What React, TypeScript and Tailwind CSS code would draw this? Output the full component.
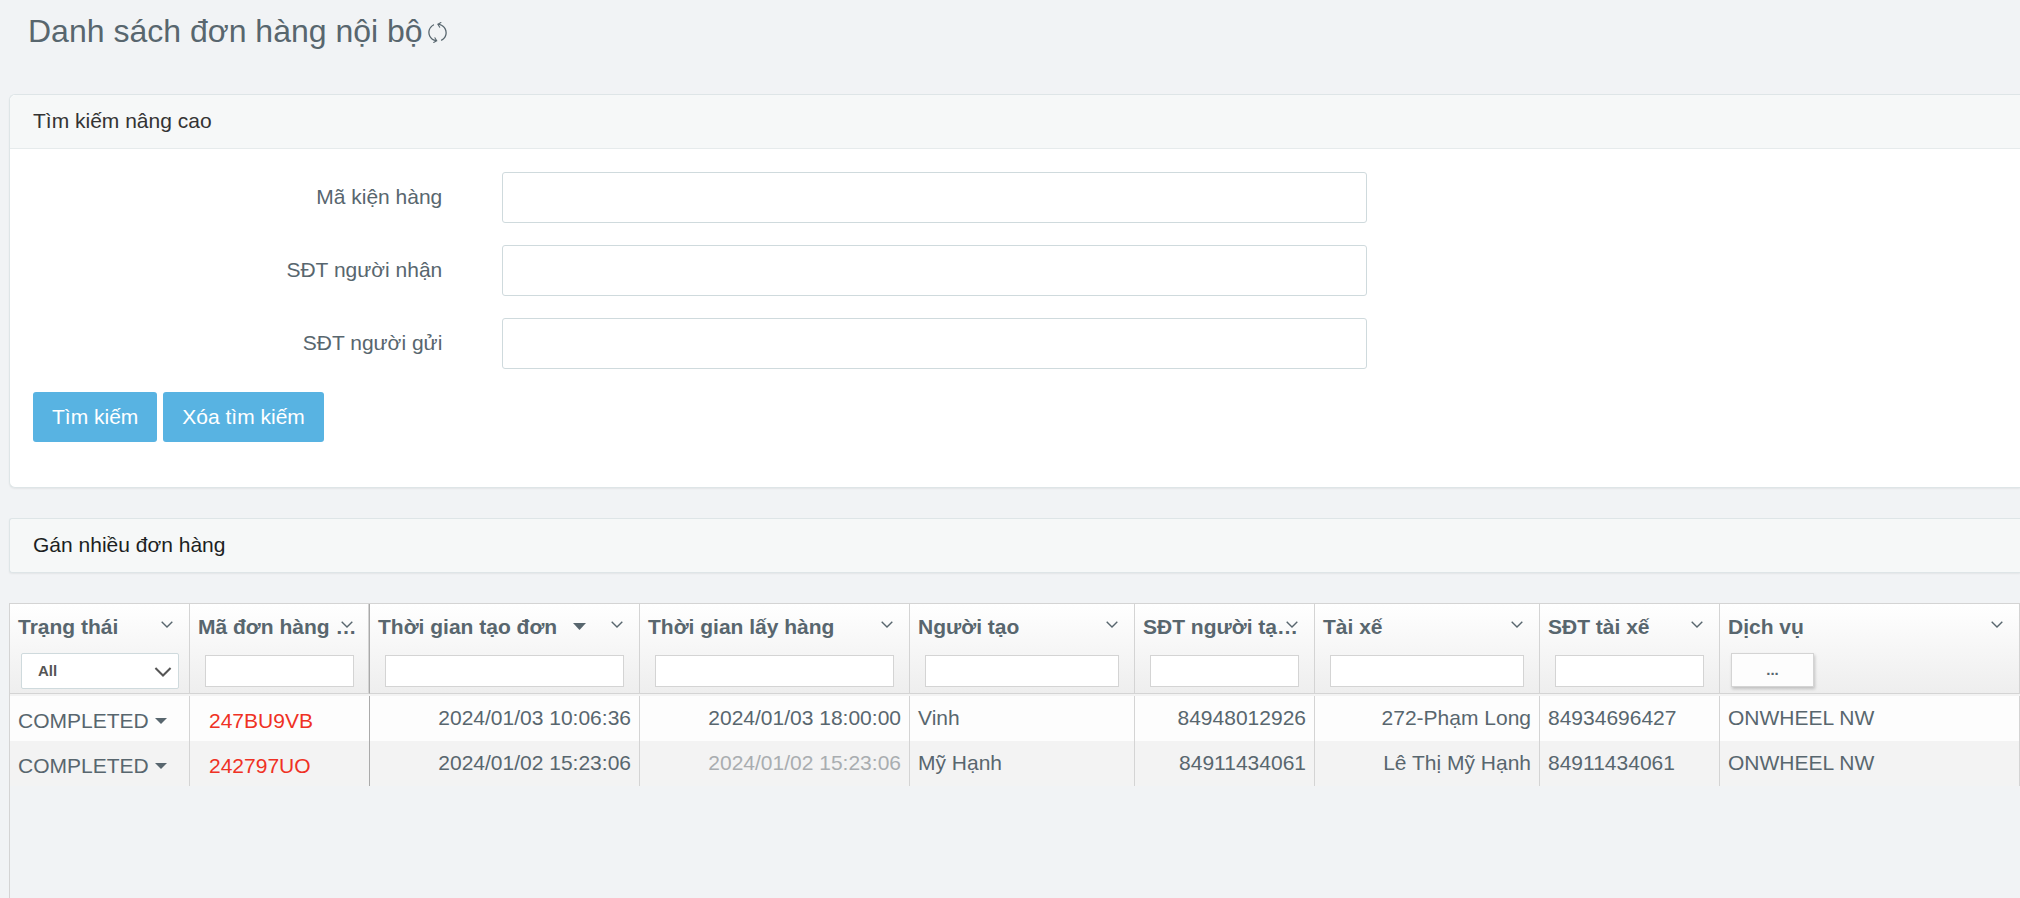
import { SlRefresh } from "react-icons/sl";

type Column = {
  title: string;
  width: string;
  filter: "text" | "select" | "button";
  sorted?: boolean;
  pinnedEdge?: boolean;
};

const columns: Column[] = [
  { title: "Trạng thái", width: "w-[180px]", filter: "select" },
  { title: "Mã đơn hàng …", width: "w-[180px]", filter: "text", pinnedEdge: true },
  { title: "Thời gian tạo đơn", width: "w-[270px]", filter: "text", sorted: true },
  { title: "Thời gian lấy hàng", width: "w-[270px]", filter: "text" },
  { title: "Người tạo", width: "w-[225px]", filter: "text" },
  { title: "SĐT người tạ…", width: "w-[180px]", filter: "text" },
  { title: "Tài xế", width: "w-[225px]", filter: "text" },
  { title: "SĐT tài xế", width: "w-[180px]", filter: "text" },
  { title: "Dịch vụ", width: "", filter: "button" },
];

const orders = [
  {
    status: "COMPLETED",
    code: "247BU9VB",
    created: "2024/01/03 10:06:36",
    pickup: "2024/01/03 18:00:00",
    pickupMuted: false,
    creator: "Vinh",
    creatorPhone: "84948012926",
    driver: "272-Phạm Long",
    driverPhone: "84934696427",
    service: "ONWHEEL NW",
  },
  {
    status: "COMPLETED",
    code: "242797UO",
    created: "2024/01/02 15:23:06",
    pickup: "2024/01/02 15:23:06",
    pickupMuted: true,
    creator: "Mỹ Hạnh",
    creatorPhone: "84911434061",
    driver: "Lê Thị Mỹ Hạnh",
    driverPhone: "84911434061",
    service: "ONWHEEL NW",
  },
];

const fields = [
  { id: "package-code", label: "Mã kiện hàng" },
  { id: "receiver-phone", label: "SĐT người nhận" },
  { id: "sender-phone", label: "SĐT người gửi" },
];

function Chevron({ className }: { className: string }) {
  return (
    <svg viewBox="0 0 12 7" fill="none" stroke="currentColor" className={className} aria-hidden="true">
      <path d="M0.7 0.7 6 6 11.3 0.7" strokeWidth="1.4" />
    </svg>
  );
}

function Caret({ className }: { className: string }) {
  return (
    <svg
      viewBox="0 0 12 6"
      fill="currentColor"
      preserveAspectRatio="none"
      className={className}
      aria-hidden="true"
    >
      <path d="M0 0H12L6 6Z" />
    </svg>
  );
}

function HeaderCell({ column }: { column: Column }) {
  return (
    <th
      scope="col"
      className={`bg-[#f3f3f3] p-0 pb-[2px] text-left align-top font-bold ${column.width}`}
    >
      <div
        className={`relative h-[90px] border-b border-b-[#d4d4d4] bg-linear-to-b from-white to-[#eeeeee] ${
          column.pinnedEdge
            ? "border-r border-r-[#aaaaaa] shadow-[inset_-1px_0_0_#d4d4d4]"
            : "border-r border-r-[#d4d4d4]"
        }`}
      >
        <div className="flex h-[49px] items-center gap-4 pb-1 pl-2 leading-6 whitespace-nowrap">
          <span>{column.title}</span>
          {column.sorted && <Caret className="h-[7px] w-[13px]" />}
        </div>
        <button
          type="button"
          aria-label={`Menu ${column.title}`}
          className="absolute top-[17px] right-[16px] flex"
        >
          <Chevron className="h-[7px] w-3" />
        </button>

        {column.filter === "text" && (
          <div className="px-[15px] pt-[2px]">
            <input
              type="text"
              aria-label={column.title}
              className="block h-8 w-full border border-[#d4d4d4] bg-white px-1 text-[15px] font-normal"
            />
          </div>
        )}
        {column.filter === "select" && (
          <div className="relative mr-[10px] ml-[11px] text-[#555555]">
            <select
              aria-label={column.title}
              className="block h-9 w-full appearance-none rounded-[2px] border border-[#cfdadd] bg-white pl-4 text-[15px] font-bold"
            >
              <option>All</option>
            </select>
            <Chevron className="pointer-events-none absolute top-[14px] right-[7px] h-[10px] w-[18px]" />
          </div>
        )}
        {column.filter === "button" && (
          <button
            type="button"
            className="ml-[11px] block h-[34px] w-[83px] border border-[#d4d4d4] bg-[#fdfdfd] text-[15px] font-bold shadow-[1px_2px_3px_rgba(0,0,0,0.2)]"
          >
            ...
          </button>
        )}
      </div>
    </th>
  );
}

export default function App() {
  return (
    <div className="flex min-h-screen flex-col overflow-hidden bg-[#f1f3f5] font-['Liberation_Sans',Arial,sans-serif] text-[21px] leading-7 text-[#58666e]">
      <header className="flex h-[94px] items-start gap-1 pt-[11px] pl-[28px]">
        <h1 className="text-[32px] leading-10">Danh sách đơn hàng nội bộ</h1>
        <button type="button" aria-label="Làm mới" className="mt-[11px] flex">
          <SlRefresh className="size-[21px]" />
        </button>
      </header>

      <main className="flex grow flex-col gap-[30px] pl-[9px]">
        <section className="rounded-l-[6px] border border-r-0 border-[#dee5e7] bg-white shadow-[0_1px_2px_rgba(0,0,0,0.06)]">
          <h2 className="rounded-tl-[6px] border-b border-[#e6ebec] bg-[#f6f8f8] px-[23px] pt-3 pb-[13px] text-[#333333]">
            Tìm kiếm nâng cao
          </h2>
          <form className="pt-[23px] pb-[45px]" onSubmit={(event) => event.preventDefault()}>
            <div className="flex flex-col gap-[22px]">
              {fields.map((field) => (
                <div key={field.id} className="grid grid-cols-[23%_46%] items-center">
                  <label htmlFor={field.id} className="px-[30px] pb-[2px] text-right">
                    {field.label}
                  </label>
                  <div className="px-[30px]">
                    <input
                      id={field.id}
                      type="text"
                      className="block h-[51px] w-full rounded-[3px] border border-[#cfdadd] bg-white px-4"
                    />
                  </div>
                </div>
              ))}
            </div>
            <div className="mt-[23px] flex gap-[6px] px-[23px] text-white">
              <button type="submit" className="h-[50px] rounded-[3px] bg-[#58b3e2] px-[19px]">
                Tìm kiếm
              </button>
              <button type="reset" className="h-[50px] rounded-[3px] bg-[#58b3e2] px-[19px]">
                Xóa tìm kiếm
              </button>
            </div>
          </form>
        </section>

        <section className="rounded-l-[3px] border border-r-0 border-[#dee5e7] bg-[#f6f8f8] px-[23px] pt-3 pb-[13px] text-[#1c1f22] shadow-[0_1px_2px_rgba(0,0,0,0.06)]">
          <h2>Gán nhiều đơn hàng</h2>
        </section>

        <section className="grow border-t border-l border-[#d4d4d4]">
          <table className="w-full table-fixed border-separate border-spacing-0">
            <thead>
              <tr>
                {columns.map((column) => (
                  <HeaderCell key={column.title} column={column} />
                ))}
              </tr>
            </thead>
            <tbody className="[&_td]:h-[45px] [&_td]:border-r [&_td]:border-[#d4d4d4] [&_td]:px-2 [&_td]:pt-0 [&_td]:pb-[2px] [&_td]:whitespace-nowrap">
              {orders.map((order) => (
                <tr key={order.code} className="odd:bg-[#fdfdfd] even:bg-[#f3f3f3]">
                  <td>
                    <button type="button" className="flex items-center gap-[6px] pt-[6px]">
                      {order.status}
                      <Caret className="h-[6px] w-3" />
                    </button>
                  </td>
                  <td className="border-r-[#aaaaaa]!">
                    <a href="#" className="block pt-[6px] pl-[11px] text-[#ef3124]">
                      {order.code}
                    </a>
                  </td>
                  <td className="text-right">{order.created}</td>
                  <td className={order.pickupMuted ? "text-right text-[#a9adb0]" : "text-right"}>
                    {order.pickup}
                  </td>
                  <td>{order.creator}</td>
                  <td className="text-right">{order.creatorPhone}</td>
                  <td className="text-right">{order.driver}</td>
                  <td>{order.driverPhone}</td>
                  <td>{order.service}</td>
                </tr>
              ))}
            </tbody>
          </table>
        </section>
      </main>
    </div>
  );
}
